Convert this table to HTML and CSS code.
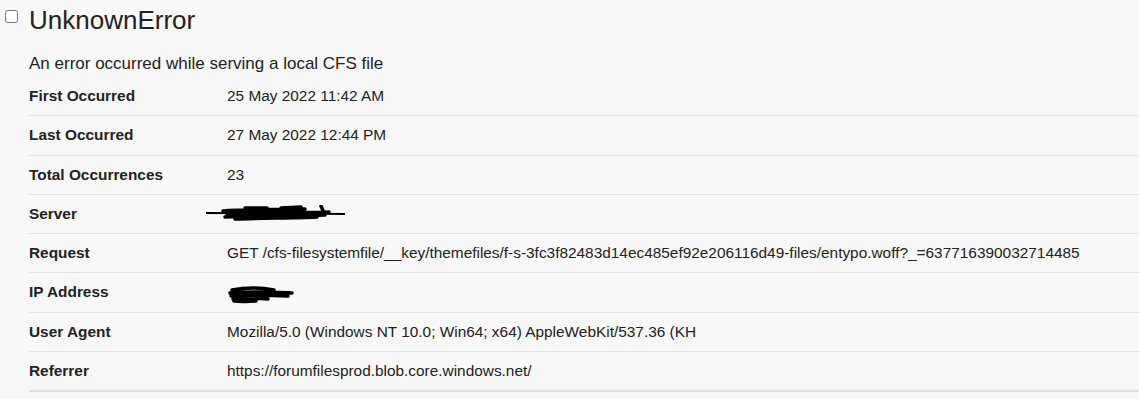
FILE: index.html
```html
<!DOCTYPE html>
<html>
<head>
<meta charset="utf-8">
<link rel="stylesheet" href="styles.css">
</head>
<body>
<div class="entry">
  <div class="entry-head">
    <input type="checkbox" class="select">
    <h1 class="title">UnknownError</h1>
  </div>
  <div class="entry-body">
    <p class="message">An error occurred while serving a local CFS file</p>
    <table class="details">
      <tr><th>First Occurred</th><td>25 May 2022 11:42 AM</td></tr>
      <tr><th>Last Occurred</th><td>27 May 2022 12:44 PM</td></tr>
      <tr><th>Total Occurrences</th><td>23</td></tr>
      <tr><th>Server</th><td><svg class="redact redact-server" width="142" height="18" viewBox="0 0 142 18"><path d="M1 8 L140 9" stroke="#000" stroke-width="2" fill="none"/><path d="M18 6 C40 4 70 5 100 4 M22 9 C60 7 100 8 124 7 M20 12 C50 10 90 11 120 10 M30 14 C60 13 90 13 112 12 M40 3 L62 3 M76 3 L96 2 M116 1 L119 8" stroke="#000" stroke-width="3.5" fill="none" stroke-linecap="round"/></svg></td></tr>
      <tr><th>Request</th><td>GET /cfs-filesystemfile/__key/themefiles/f-s-3fc3f82483d14ec485ef92e206116d49-files/entypo.woff?_=637716390032714485</td></tr>
      <tr><th>IP Address</th><td><svg class="redact redact-ip" width="66" height="18" viewBox="0 0 66 18"><path d="M4 4 C20 1 35 2 46 4 M2 7 C20 5 40 6 64 7 M3 10 C20 9 40 9 60 10 M5 13 C15 12 25 12 40 13 M6 15 C15 16 22 15 28 15" stroke="#000" stroke-width="3.5" fill="none" stroke-linecap="round"/></svg></td></tr>
      <tr><th>User Agent</th><td>Mozilla/5.0 (Windows NT 10.0; Win64; x64) AppleWebKit/537.36 (KH</td></tr>
      <tr><th>Referrer</th><td>https://forumfilesprod.blob.core.windows.net/</td></tr>
    </table>
  </div>
</div>
</body>
</html>
```
FILE: styles.css
```css
html, body {
  margin: 0;
  padding: 0;
  background: #f8f8f8;
}
body {
  font-family: "Liberation Sans", Arial, sans-serif;
  color: #222;
  overflow: hidden;
}
.entry-head {
  display: flex;
  align-items: flex-start;
  height: 46px;
}
.select {
  width: 13px;
  height: 13px;
  margin: 10px 0 0 5px;
}
.title {
  margin: 4px 0 0 11px;
  font-size: 26px;
  font-weight: normal;
  line-height: 32px;
}
.entry-body {
  padding-left: 29px;
}
.message {
  margin: 0;
  font-size: 17px;
  line-height: 20px;
  height: 23px;
  padding-top: 8px;
  box-sizing: content-box;
}
.details {
  border-collapse: collapse;
  width: calc(100% + 40px);
  font-size: 15.4px;
  border-bottom: 2px solid #ddd;
}
.details th, .details td {
  text-align: left;
  padding: 11px 0 11px 0;
  line-height: 16.3px;
  height: 16.3px;
  border-bottom: 1px solid #e1e1e1;
  white-space: nowrap;
}
.details th {
  width: 198px;
  font-weight: bold;
}
.details tr:last-child th, .details tr:last-child td {
  border-bottom: 0;
}
.redact {
  display: block;
}
.redact-server {
  margin: -3px 0 -2px -22px;
}
.redact-ip {
  margin: 0 0 -4px 1px;
}
```
